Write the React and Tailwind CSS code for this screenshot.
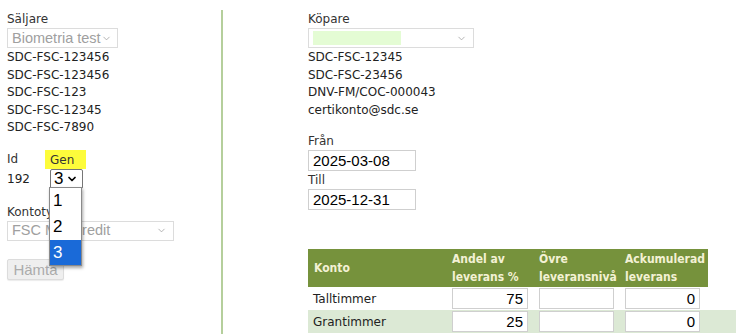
import React from "react";
import { ChevronDown } from "lucide-react";

const verdana = "font-['DejaVu_Sans','Verdana',sans-serif]";
const condensed = "font-['DejaVu_Sans_Condensed','DejaVu_Sans','Tahoma',sans-serif]";
const arial = "font-['Liberation_Sans','Arial',sans-serif]";

const sellerIds = ["SDC-FSC-123456", "SDC-FSC-123456", "SDC-FSC-123", "SDC-FSC-12345", "SDC-FSC-7890"];
const buyerIds = ["SDC-FSC-12345", "SDC-FSC-23456", "DNV-FM/COC-000043", "certikonto@sdc.se"];

const rows = [
  { konto: "Talltimmer", andel: "75", ovre: "", ack: "0" },
  { konto: "Grantimmer", andel: "25", ovre: "", ack: "0" },
  { konto: "", andel: "", ovre: "", ack: "" },
];

const FakeSelect = ({ width, text, disabled, highlight }) => (
  <div
    className={`${width} h-[20px] flex items-center justify-between border border-[#dcdcdc] bg-white pl-[4px] pr-[6px] ${arial} text-[14.5px] leading-none ${
      disabled ? "text-[#a0a0a0]" : "text-black"
    }`}
  >
    {highlight ? (
      <span className="block w-[88px] h-[14px] bg-[#e4fcd4]" />
    ) : (
      <span className="whitespace-nowrap">{text}</span>
    )}
    <ChevronDown className="w-[11px] h-[11px] text-[#9a9a9a] shrink-0" strokeWidth={1.6} />
  </div>
);

const Field = ({ value, width = "w-[76px]", align = "text-right" }) => (
  <div
    className={`${width} h-[21px] border border-[#cfcfcf] bg-white ${arial} text-[15px] leading-[19px] px-[4px] ${align} text-black`}
  >
    {value}
  </div>
);

export default function App() {
  return (
    <div className={`min-h-screen bg-white text-[#222] ${verdana} text-[12px] overflow-hidden`}>
      <div className="flex pt-[10px] h-[334px]">
        {/* Vänster kolumn */}
        <div className="w-[223px] shrink-0 border-r-2 border-[#b5cf9c] pl-[7px] pt-[1px] relative">
          <div className="leading-[17px] text-[#333]">Säljare</div>
          <FakeSelect width="w-[111px]" text="Biometria test" disabled />
          <div className="mt-[1px]">
            {sellerIds.map((id, i) => (
              <div key={i} className="leading-[17.5px]">
                {id}
              </div>
            ))}
          </div>

          <div className="flex mt-[13px] h-[19px] items-center">
            <span className="w-[38px] text-[#333]">Id</span>
            <span className="bg-[#fdfc3b] h-[19px] w-[41px] pl-[5px] leading-[21px] text-[#333]">Gen</span>
          </div>
          <div className="flex h-[20px] items-center">
            <span className="w-[43px]">192</span>
            <div className={`w-[33px] h-[20px] border border-[#767676] rounded-[2px] bg-white flex items-center pl-[3px] gap-[3px] ${arial} text-[17px] text-black`}>
              3
              <ChevronDown className="w-[12px] h-[12px] text-black" strokeWidth={3.5} />
            </div>
          </div>

          <div className="mt-[15px] leading-[17px] text-[#333]">Kontotyp</div>
          <FakeSelect width="w-[167px]" text="FSC Mix Credit" disabled />

          <button
            className={`mt-[18px] w-[57px] h-[21px] border border-[#dcdcdc] rounded-[2px] bg-[#efefef] ${arial} text-[15px] text-[#ababab] leading-none shadow-[0_1px_1px_rgba(0,0,0,0.08)]`}
          >
            Hämta
          </button>

          {/* Öppen lista för Gen */}
          <div className={`absolute left-[49px] top-[177px] w-[33px] border border-[#8a8a8a] bg-white shadow-[1px_2px_3px_rgba(0,0,0,0.35)] ${arial} text-[17px] text-black`}>
            <div className="h-[25px] leading-[25px] pl-[3px]">1</div>
            <div className="h-[27px] leading-[27px] pl-[3px]">2</div>
            <div className="h-[25px] leading-[25px] pl-[3px] bg-[#1a6ad8] text-white">3</div>
          </div>
        </div>

        {/* Höger kolumn */}
        <div className="pl-[85px] pt-[1px] flex-1 min-w-0">
          <div className="leading-[17px] text-[#333]">Köpare</div>
          <FakeSelect width="w-[166px]" highlight />
          <div className="mt-[1px]">
            {buyerIds.map((id, i) => (
              <div key={i} className="leading-[17.5px]">
                {id}
              </div>
            ))}
          </div>

          <div className="mt-[14px] leading-[17px] text-[#333]">Från</div>
          <Field value="2025-03-08" width="w-[108px]" align="text-left" />
          <div className="mt-[1px] leading-[17px] text-[#333]">Till</div>
          <Field value="2025-12-31" width="w-[108px]" align="text-left" />

          <div className="mt-[39px] w-[440px]">
            <div className={`grid grid-cols-[141px_87px_86px_86px_40px] h-[38px] ${condensed} text-[12px] font-bold text-[#f3f1d4]`}>
              <div className="bg-[#76923c] flex items-center pl-[6px]">Konto</div>
              <div className="bg-[#76923c] leading-[18px] pt-[1px] pl-[3px]">
                Andel av
                <br />
                leverans %
              </div>
              <div className="bg-[#76923c] leading-[18px] pt-[1px] pl-[3px] whitespace-nowrap">
                Övre
                <br />
                leveransnivå
              </div>
              <div className="bg-[#76923c] leading-[18px] pt-[1px] pl-[3px] whitespace-nowrap">
                Ackumulerad
                <br />
                leverans
              </div>
              <div className="bg-white" />
            </div>
            {rows.map((r, i) => (
              <div
                key={i}
                className={`grid grid-cols-[141px_87px_86px_86px_40px] h-[23px] items-center ${
                  i % 2 === 1 ? "bg-[#dce9d5]" : "bg-white"
                }`}
              >
                <div className="pl-[5px]">{r.konto}</div>
                <div className="pl-[3px]">
                  <Field value={r.andel} />
                </div>
                <div className="pl-[3px]">
                  <Field value={r.ovre} width="w-[75px]" />
                </div>
                <div className="pl-[3px]">
                  <Field value={r.ack} width="w-[75px]" />
                </div>
                <div />
              </div>
            ))}
          </div>
        </div>
      </div>
    </div>
  );
}
